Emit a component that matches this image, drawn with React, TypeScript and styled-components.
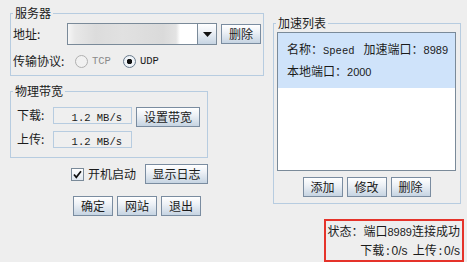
import React from "react";
import styled, { createGlobalStyle } from "styled-components";

const Global = createGlobalStyle`
  html, body { margin: 0; padding: 0; background: #eeeeee; }
  body {
    font-family: "Noto Sans CJK SC", "Noto Sans", sans-serif;
    font-size: 12px;
    color: #1b1b1b;
  }
  * { box-sizing: border-box; }
`;

const Page = styled.div`
  width: 467px;
  height: 262px;
  overflow: hidden;
  display: flex;
  flex-direction: column;
  padding: 6px 0 0 10px;
`;

const Main = styled.div`
  display: flex;
  align-items: flex-start;
  gap: 9px;
`;

const LeftCol = styled.div`
  display: flex;
  flex-direction: column;
  width: 254px;
`;

const RightCol = styled.div`
  margin-top: 10px;
`;

const Group = styled.fieldset<{ $w: number; $mt?: number }>`
  width: ${(p) => p.$w}px;
  margin: ${(p) => p.$mt ?? 0}px 0 0 0;
  padding: 0;
  min-width: 0;
  border: 1px solid #b7cce0;
`;

const Legend = styled.legend`
  margin-left: 2px;
  padding: 0 2px;
  font-size: 12px;
  line-height: 14px;
`;

const Body = styled.div<{ $pad: string }>`
  padding: ${(p) => p.$pad};
  display: flex;
  flex-direction: column;
`;

const Row = styled.div<{ $h?: number; $mt?: number; $align?: string; $pl?: number }>`
  display: flex;
  align-items: ${(p) => p.$align ?? "center"};
  height: ${(p) => (p.$h ? `${p.$h}px` : "auto")};
  margin-top: ${(p) => p.$mt ?? 0}px;
  padding-left: ${(p) => p.$pl ?? 0}px;
`;

const Label = styled.span<{ $w: number; $ml?: number }>`
  width: ${(p) => p.$w}px;
  margin-left: ${(p) => p.$ml ?? 0}px;
  flex: none;
  line-height: 16px;
  white-space: nowrap;
`;

const Button = styled.button<{ $w: number; $ml?: number }>`
  width: ${(p) => p.$w}px;
  height: 20px;
  margin: 0 0 0 ${(p) => p.$ml ?? 0}px;
  padding: 0;
  flex: none;
  font-family: inherit;
  font-size: 12px;
  line-height: 18px;
  color: #1b1b1b;
  border: 1px solid #7a8ca0;
  border-radius: 0;
  background: linear-gradient(to bottom, #ffffff 0%, #edf1f6 40%, #c6d4e2 100%);
`;

const Combo = styled.div`
  display: flex;
  width: 150px;
  height: 22px;
  border: 1px solid #7a8a99;
  flex: none;
`;

const ComboField = styled.div`
  flex: 1;
  background: linear-gradient(
    to right,
    #f6f6f6 0px,
    #e8e8e8 7px,
    #dcdcdc 28px,
    #e1e1e1 55px,
    #dadada 95px,
    #e3e3e3 108px,
    #ffffff 112px
  );
`;

const ComboArrow = styled.div`
  width: 19px;
  border-left: 1px solid #7a8a99;
  background: linear-gradient(to bottom, #ffffff 0%, #edf1f6 40%, #c6d4e2 100%);
  display: flex;
  align-items: center;
  justify-content: center;
`;

const Radio = styled.span<{ $on?: boolean }>`
  width: 13px;
  height: 13px;
  border-radius: 50%;
  flex: none;
  border: 1px solid ${(p) => (p.$on ? "#6a7b8c" : "#b0b0b0")};
  background: ${(p) =>
    p.$on ? "radial-gradient(circle, #111 0 2.5px, #f4f7fa 3px, #dde6ef 100%)" : "#f1f1f1"};
`;

const Mono = styled.span<{ $dim?: boolean }>`
  font-family: "Liberation Mono", "DejaVu Sans Mono", monospace;
  font-size: 10.5px;
  color: ${(p) => (p.$dim ? "#8a8a8a" : "#1b1b1b")};
`;

const Num = styled.span<{ $size?: number }>`
  font-family: "Liberation Sans", Arial, sans-serif;
  font-size: ${(p) => p.$size ?? 11}px;
`;

const Colon = styled.span`
  margin: 0 2px;
`;

const Gap = styled.span<{ $w: number }>`
  display: inline-block;
  width: ${(p) => p.$w}px;
`;

const RadioItem = styled.span<{ $ml?: number }>`
  display: inline-flex;
  align-items: center;
  gap: 4px;
  margin-left: ${(p) => p.$ml ?? 0}px;
`;

const Field = styled.div`
  width: 79px;
  height: 17px;
  flex: none;
  border: 1px solid #b7cce0;
  background: #efefef;
  text-align: right;
  padding-right: 9px;
  line-height: 15px;
`;

const Check = styled.span`
  width: 13px;
  height: 13px;
  flex: none;
  border: 1px solid #7a8a99;
  background: linear-gradient(to bottom, #ffffff, #dfe7ef);
  display: flex;
`;

const List = styled.div`
  width: 179px;
  height: 139px;
  border: 1px solid #7a8a99;
  background: #ffffff;
`;

const ListItem = styled.div`
  background: #cfe3fa;
  padding: 6px 0 6px 9px;
  line-height: 19px;
  white-space: nowrap;
`;

const Center = styled.div`
  display: flex;
  justify-content: center;
  gap: 4px;
  margin-top: 6px;
`;

const Status = styled.div`
  align-self: flex-end;
  margin: 3px 3px 0 0;
  width: 140px;
  border: 2px solid #e5332a;
  padding: 1px 2px 0 0;
  text-align: right;
  line-height: 17px;
  white-space: nowrap;
`;

export default function App() {
  return (
    <>
      <Global />
      <Page>
        <Main>
          <LeftCol>
            <Group $w={254}>
              <Legend>服务器</Legend>
              <Body $pad="3px 0 5px 2px">
                <Row $h={22}>
                  <Label $w={54}>地址:</Label>
                  <Combo>
                    <ComboField />
                    <ComboArrow>
                      <svg width="9" height="5" viewBox="0 0 9 5">
                        <path d="M0 0 H9 L4.5 5 Z" fill="#111" />
                      </svg>
                    </ComboArrow>
                  </Combo>
                  <Button $w={40} $ml={4}>删除</Button>
                </Row>
                <Row $h={18} $mt={7}>
                  <Label $w={62}>传输协议:</Label>
                  <RadioItem>
                    <Radio />
                    <Mono $dim>TCP</Mono>
                  </RadioItem>
                  <RadioItem $ml={12}>
                    <Radio $on />
                    <Mono>UDP</Mono>
                  </RadioItem>
                </Row>
              </Body>
            </Group>

            <Group $w={198} $mt={8}>
              <Legend>物理带宽</Legend>
              <Body $pad="9px 0 9px 6px">
                <Row $align="flex-start">
                  <Label $w={36}>下载:</Label>
                  <Field>
                    <Mono>1.2 MB/s</Mono>
                  </Field>
                  <Button $w={64} $ml={4}>设置带宽</Button>
                </Row>
                <Row $align="flex-start" $mt={4}>
                  <Label $w={36}>上传:</Label>
                  <Field>
                    <Mono>1.2 MB/s</Mono>
                  </Field>
                </Row>
              </Body>
            </Group>

            <Row $h={20} $mt={6} $pl={61}>
              <Check>
                <svg width="11" height="11" viewBox="0 0 11 11">
                  <path d="M2 5.5 L4.3 8.3 L9 2.2" stroke="#111" strokeWidth="1.7" fill="none" />
                </svg>
              </Check>
              <Label $w={48} $ml={4}>开机启动</Label>
              <Button $w={63} $ml={9}>显示日志</Button>
            </Row>
            <Row $h={20} $mt={12} $pl={63}>
              <Button $w={40}>确定</Button>
              <Button $w={40} $ml={4}>网站</Button>
              <Button $w={40} $ml={4}>退出</Button>
            </Row>
          </LeftCol>

          <RightCol>
            <Group $w={188}>
              <Legend>加速列表</Legend>
              <Body $pad="2px 4px 6px 3px">
                <List>
                  <ListItem>
                    <div>
                      名称：<Mono>Speed</Mono>
                      <Gap $w={9} />加速端口：<Num>8989</Num>
                    </div>
                    <div>
                      本地端口：<Num>2000</Num>
                    </div>
                  </ListItem>
                </List>
                <Center>
                  <Button $w={40}>添加</Button>
                  <Button $w={40}>修改</Button>
                  <Button $w={40}>删除</Button>
                </Center>
              </Body>
            </Group>
          </RightCol>
        </Main>

        <Status>
          <div>
            状态：端口<Num>8989</Num>连接成功
          </div>
          <div>
            下载<Colon>:</Colon><Num $size={12}>0/s</Num>
            <Gap $w={5} />上传<Colon>:</Colon><Num $size={12}>0/s</Num>
          </div>
        </Status>
      </Page>
    </>
  );
}
